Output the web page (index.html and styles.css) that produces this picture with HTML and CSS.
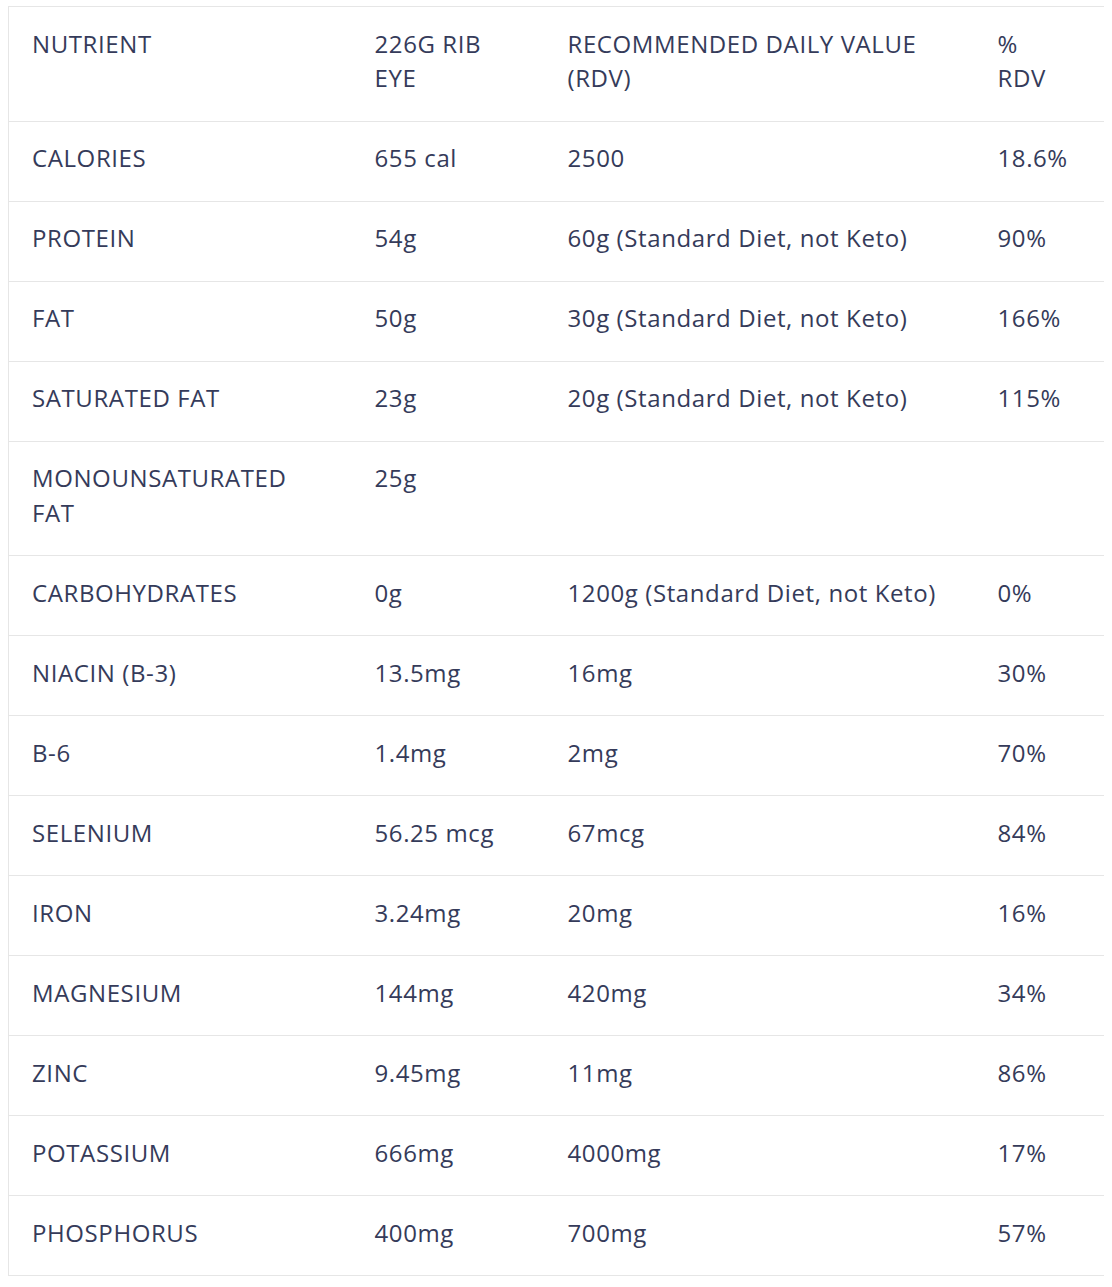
FILE: index.html
```html
<!DOCTYPE html>
<html>
<head>
<meta charset="utf-8">
<link rel="stylesheet" href="styles.css">
</head>
<body>
<table class="nutrition">
  <colgroup>
    <col class="c1"><col class="c2"><col class="c3"><col class="c4">
  </colgroup>
  <thead>
    <tr><th>NUTRIENT</th><th>226G RIB EYE</th><th>RECOMMENDED DAILY VALUE (RDV)</th><th>% RDV</th></tr>
  </thead>
  <tbody>
    <tr><td>CALORIES</td><td>655 cal</td><td>2500</td><td>18.6%</td></tr>
    <tr><td>PROTEIN</td><td>54g</td><td>60g (Standard Diet, not Keto)</td><td>90%</td></tr>
    <tr><td>FAT</td><td>50g</td><td>30g (Standard Diet, not Keto)</td><td>166%</td></tr>
    <tr><td>SATURATED FAT</td><td>23g</td><td>20g (Standard Diet, not Keto)</td><td>115%</td></tr>
    <tr><td>MONOUNSATURATED FAT</td><td>25g</td><td></td><td></td></tr>
    <tr><td>CARBOHYDRATES</td><td>0g</td><td>1200g (Standard Diet, not Keto)</td><td>0%</td></tr>
    <tr><td>NIACIN (B-3)</td><td>13.5mg</td><td>16mg</td><td>30%</td></tr>
    <tr><td>B-6</td><td>1.4mg</td><td>2mg</td><td>70%</td></tr>
    <tr><td>SELENIUM</td><td>56.25 mcg</td><td>67mcg</td><td>84%</td></tr>
    <tr><td>IRON</td><td>3.24mg</td><td>20mg</td><td>16%</td></tr>
    <tr><td>MAGNESIUM</td><td>144mg</td><td>420mg</td><td>34%</td></tr>
    <tr><td>ZINC</td><td>9.45mg</td><td>11mg</td><td>86%</td></tr>
    <tr><td>POTASSIUM</td><td>666mg</td><td>4000mg</td><td>17%</td></tr>
    <tr><td>PHOSPHORUS</td><td>400mg</td><td>700mg</td><td>57%</td></tr>
  </tbody>
</table>
</body>
</html>
```
FILE: styles.css
```css
html, body {
  background: #ffffff;
}
body {
  margin: 6px 8px 8px 8px;
  font-family: "Open Sans", "Noto Sans", sans-serif;
  color: #353b5a;
}
.nutrition {
  width: 1096px;
  border-collapse: collapse;
  table-layout: fixed;
  border: 1px solid #e6e6e6;
}
.c1 { width: 343px; }
.c2 { width: 193px; }
.c3 { width: 430px; }
.c4 { width: 130px; }
.nutrition th,
.nutrition td {
  font-size: 24px;
  font-weight: 400;
  line-height: 34.5px;
  letter-spacing: 0.6px;
  padding: 19.5px 23px 25px 23px;
  text-align: left;
  vertical-align: top;
  border-bottom: 1px solid #e6e6e6;
}
.nutrition th:last-child,
.nutrition td:last-child {
  padding-right: 33px;
}
```
